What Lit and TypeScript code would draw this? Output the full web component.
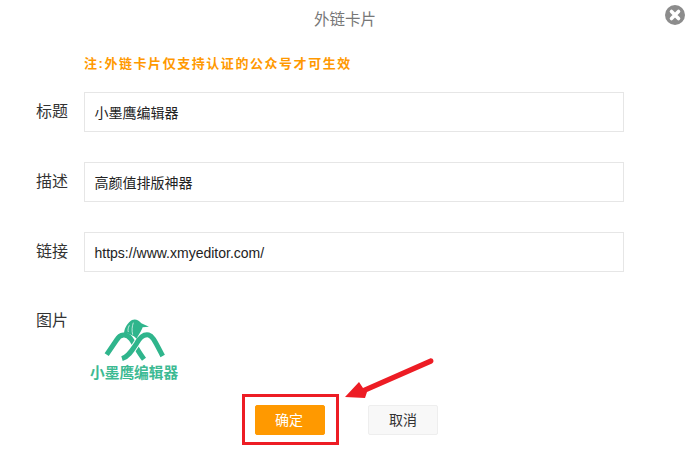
import { LitElement, html, css } from "lit";
import { customElement } from "lit/decorators.js";

@customElement("app-root")
export class AppRoot extends LitElement {
  static styles = css`
    :host {
      display: block;
      width: 693px;
      height: 474px;
      position: relative;
      overflow: hidden;
      background: #fff;
      font-family: "Liberation Sans", "Noto Sans CJK SC", sans-serif;
    }
    .title {
      height: 40px;
      line-height: 40px;
      text-align: center;
      font-size: 15.5px;
      color: #777;
      padding-right: 3px;
    }
    .close {
      position: absolute;
      left: 665px;
      top: 5px;
      width: 20px;
      height: 20px;
    }
    .body {
      padding: 13px 69px 0 36px;
    }
    .note {
      margin-left: 48px;
      height: 20px;
      line-height: 21px;
      font-size: 13px;
      font-weight: 700;
      letter-spacing: 1.55px;
      color: #ff9900;
    }
    .row {
      display: flex;
      align-items: flex-start;
      margin-bottom: 30px;
    }
    .row.first {
      margin-top: 19px;
    }
    .label {
      width: 48px;
      flex: none;
      height: 40px;
      line-height: 40px;
      font-size: 16px;
      color: #333;
    }
    .input {
      flex: 1;
      height: 40px;
      box-sizing: border-box;
      border: 1px solid #e6e6e6;
      padding: 0 9.5px;
      line-height: 40px;
      font-size: 14px;
      color: #222;
    }
    .pic {
      display: flex;
      align-items: flex-start;
    }
    .pic .label {
      height: 38px;
      line-height: 38px;
    }
    .logo {
      width: 110px;
      height: 80px;
      margin: 8px 0 0 -4px;
      display: block;
    }
    .logo-text {
      position: absolute;
      left: 90px;
      top: 363px;
      font-size: 14.7px;
      line-height: 21px;
      font-weight: 700;
      color: #3dba93;
      white-space: nowrap;
    }
    .actions {
      position: absolute;
      left: 255px;
      top: 405px;
      display: flex;
      gap: 43px;
    }
    .btn {
      width: 70px;
      height: 30px;
      box-sizing: border-box;
      line-height: 28px;
      text-align: center;
      font-size: 14px;
      border-radius: 2px;
      border: 1px solid #eee;
      background: #f8f8f8;
      color: #333;
    }
    .btn.primary {
      background: #ff9900;
      border-color: #ff9900;
      color: #fff;
      padding-right: 2px;
    }
    .mark {
      position: absolute;
      left: 242px;
      top: 394px;
      width: 97px;
      height: 51px;
      box-sizing: border-box;
      border: 3px solid #ed1c24;
    }
    .arrow {
      position: absolute;
      left: 340px;
      top: 355px;
      width: 100px;
      height: 50px;
    }
  `;

  render() {
    return html`
      <div class="title">外链卡片</div>
      <svg class="close" viewBox="0 0 20 20">
        <circle cx="10" cy="10" r="10" fill="#8c8c8c"></circle>
        <path d="M6.5 6.5 13.5 13.5M13.5 6.5 6.5 13.5" stroke="#fff" stroke-width="3.6" stroke-linecap="round"></path>
      </svg>
      <div class="body">
        <div class="note">注:外链卡片仅支持认证的公众号才可生效</div>
        <div class="row first">
          <div class="label">标题</div>
          <div class="input">小墨鹰编辑器</div>
        </div>
        <div class="row">
          <div class="label">描述</div>
          <div class="input">高颜值排版神器</div>
        </div>
        <div class="row">
          <div class="label">链接</div>
          <div class="input">https://www.xmyeditor.com/</div>
        </div>
        <div class="pic">
          <div class="label">图片</div>
          <svg class="logo" viewBox="0 0 330 240">
            <path d="M80 134 110 90C120 72 140 70 152 86C162 100 174 124 192 148" fill="none" stroke="#2fb58c" stroke-width="15"></path>
            <path d="M126 146C146 140 158 118 170 100C180 82 192 72 206 75C218 78 224 92 248 138" fill="none" stroke="#fff" stroke-width="21"></path>
            <path d="M126 146C146 140 158 118 170 100C180 82 192 72 206 75C218 78 224 92 248 138" fill="none" stroke="#2fb58c" stroke-width="15"></path>
            <path d="M132 70C134 50 144 38 156 30C164 26 176 28 184 40L207 50 188 52C186 60 176 74 170 86C160 76 146 70 132 70Z" fill="#2fb58c"></path>
            <path d="M148 46C144 54 143 60 145 66M160 38C156 50 155 62 158 74" fill="none" stroke="#fff" stroke-width="2"></path>
          </svg>
        </div>
      </div>
      <div class="logo-text">小墨鹰编辑器</div>
      <div class="actions">
        <div class="btn primary">确定</div>
        <div class="btn">取消</div>
      </div>
      <div class="mark"></div>
      <svg class="arrow" viewBox="0 0 100 50">
        <path d="M5 42 19 27 23 33 90 3.5C93 2.5 95 7 92 8.5L27 37 25 43Z" fill="#ed1c24"></path>
      </svg>
    `;
  }
}
